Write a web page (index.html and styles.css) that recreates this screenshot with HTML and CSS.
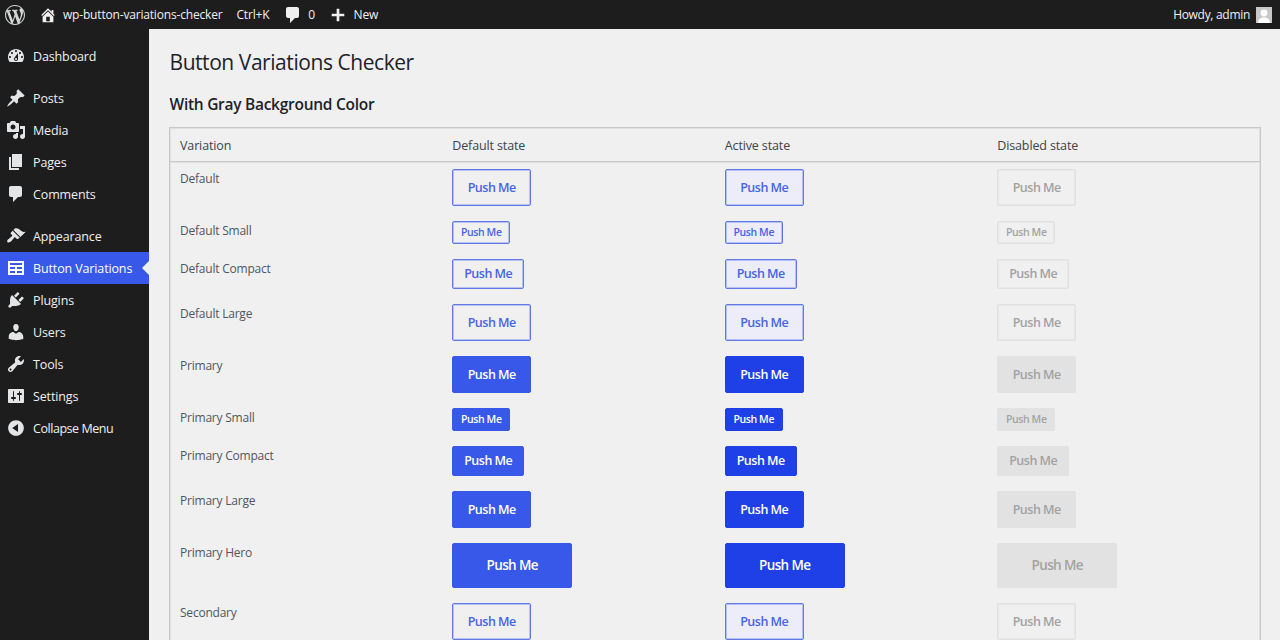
FILE: index.html
```html
<!DOCTYPE html>
<html lang="en">
<head>
<meta charset="utf-8">
<title>Button Variations Checker</title>
<link rel="stylesheet" href="styles.css">
</head>
<body>
<header class="adminbar">
  <svg class="logo" viewBox="0 0 20 20"><path d="M20 10c0-5.51-4.49-10-10-10C4.48 0 0 4.49 0 10c0 5.52 4.48 10 10 10 5.51 0 10-4.48 10-10zM7.78 15.37L4.37 6.22c.55-.02 1.17-.08 1.17-.08.5-.06.44-1.13-.06-1.11 0 0-1.45.11-2.37.11-.18 0-.37 0-.58-.01C4.12 2.69 6.87 1.11 10 1.11c2.33 0 4.45.87 6.05 2.34-.68-.11-1.65.39-1.65 1.58 0 .74.45 1.36.9 2.1.35.61.55 1.36.55 2.46 0 1.49-1.4 5-1.4 5l-3.03-8.37c.54-.02.82-.17.82-.17.5-.05.44-1.25-.06-1.22 0 0-1.44.12-2.38.12-.87 0-2.33-.12-2.33-.12-.5-.03-.56 1.2-.06 1.22l.92.08 1.26 3.41zM17.41 10c.24-.64.74-1.87.43-4.25.7 1.29 1.05 2.71 1.05 4.25 0 3.29-1.73 6.24-4.4 7.78.97-2.59 1.94-5.2 2.92-7.78zM6.1 18.09C3.12 16.65 1.11 13.53 1.11 10c0-1.3.23-2.48.72-3.59C3.25 10.3 4.67 14.2 6.1 18.09zm4.03-6.63l2.58 6.98c-.86.29-1.76.45-2.71.45-.79 0-1.57-.11-2.29-.33.81-2.38 1.62-4.74 2.42-7.1z"/></svg>
  <svg class="bar-icon home" viewBox="0 0 20 20"><path d="M16 8.5l1.53 1.53-1.06 1.06L10 4.62l-6.47 6.47-1.06-1.06L10 2.5l4 4v-2h2v4zm-6-2.46l6 5.99V18H4v-5.97zM12 17v-5H8v5h4z"/></svg>
  <span class="bar-text site">wp-button-variations-checker</span>
  <span class="bar-text ctrl">Ctrl+K</span>
  <svg class="bar-icon bubble" viewBox="0 0 20 20"><path d="M5 2h9c1.1 0 2 .9 2 2v7c0 1.1-.9 2-2 2h-2l-5 5v-5H5c-1.1 0-2-.9-2-2V4c0-1.1.9-2 2-2z"/></svg>
  <span class="bar-text count">0</span>
  <svg class="bar-icon plus" viewBox="0 0 20 20"><path d="M17 8.5v3h-5.5V17h-3v-5.5H3v-3h5.5V3h3v5.5z"/></svg>
  <span class="bar-text new">New</span>
  <span class="bar-text howdy">Howdy, admin</span>
  <span class="avatar"><svg viewBox="0 0 16 16"><circle cx="8" cy="6" r="3.4"/><path d="M2 16c0-4 2.6-5.6 6-5.6s6 1.6 6 5.6z"/></svg></span>
</header>
<div class="frame">
  <nav class="sidebar">
    <a class="item"><svg viewBox="0 0 20 20"><path d="M3.76 16h12.48c1.1-1.37 1.76-3.11 1.76-5 0-4.42-3.58-8-8-8s-8 3.58-8 8c0 1.89.66 3.63 1.76 5zM10 4c.55 0 1 .45 1 1s-.45 1-1 1-1-.45-1-1 .45-1 1-1zM6 6c.55 0 1 .45 1 1s-.45 1-1 1-1-.45-1-1 .45-1 1-1zm8 0c.55 0 1 .45 1 1s-.45 1-1 1-1-.45-1-1 .45-1 1-1zm-5.37 5.55L12 7v6c0 1.1-.9 2-2 2s-2-.9-2-2c0-.57.24-1.08.63-1.45zM4 10c.55 0 1 .45 1 1s-.45 1-1 1-1-.45-1-1 .45-1 1-1zm12 0c.55 0 1 .45 1 1s-.45 1-1 1-1-.45-1-1 .45-1 1-1zm-5 3c0-.55-.45-1-1-1s-1 .45-1 1 .45 1 1 1 1-.45 1-1z"/></svg><span>Dashboard</span></a>
    <div class="sep"></div>
    <a class="item"><svg viewBox="0 0 20 20"><path d="M10.44 3.02l1.82-1.82 6.36 6.35-1.83 1.82c-1.05-.68-2.48-.57-3.41.36l-.75.75c-.92.93-1.04 2.35-.35 3.41l-1.83 1.82-2.41-2.41-2.8 2.79c-.42.42-3.38 2.71-3.8 2.29s1.86-3.39 2.28-3.81l2.79-2.79L4.1 9.36l1.83-1.82c1.05.69 2.48.57 3.4-.36l.75-.75c.93-.92 1.05-2.35.36-3.41z"/></svg><span>Posts</span></a>
    <a class="item"><svg viewBox="0 0 20 20"><path d="M13 11V4c0-.55-.45-1-1-1h-1.67L9 1H5L3.67 3H2c-.55 0-1 .45-1 1v7c0 .55.45 1 1 1h10c.55 0 1-.45 1-1zM7 4.5c1.38 0 2.5 1.12 2.5 2.5S8.38 9.5 7 9.5 4.5 8.38 4.5 7 5.62 4.5 7 4.5zM14 6h5v10.5c0 1.38-1.12 2.5-2.5 2.5S14 17.88 14 16.5s1.12-2.5 2.5-2.5c.17 0 .34.02.5.05V9h-3V6zm-4 8.05V13h2v3.5c0 1.38-1.12 2.5-2.5 2.5S7 17.88 7 16.5 8.12 14 9.5 14c.17 0 .34.02.5.05z"/></svg><span>Media</span></a>
    <a class="item"><svg viewBox="0 0 20 20"><path d="M6 15V2h10v13H6zm-1 1h8v2H3V5h2v11z"/></svg><span>Pages</span></a>
    <a class="item"><svg viewBox="0 0 20 20"><path d="M5 2h9c1.1 0 2 .9 2 2v7c0 1.1-.9 2-2 2h-2l-5 5v-5H5c-1.1 0-2-.9-2-2V4c0-1.1.9-2 2-2z"/></svg><span>Comments</span></a>
    <div class="sep"></div>
    <a class="item"><svg viewBox="0 0 20 20"><path d="M14.48 11.06L7.41 3.99l1.5-1.5c.5-.56 2.3-.47 3.51.32 1.21.8 1.43 1.28 2.91 2.1 1.18.64 2.45 1.26 4.45.85zm-.71.71L6.7 4.7 4.93 6.47c-.39.39-.39 1.02 0 1.41l1.06 1.06c.39.39.39 1.03 0 1.42-.6.6-1.43 1.11-2.21 1.69-.35.26-.7.53-1.01.84C1.43 13.23.65 15.3 1.5 16.15s3 .09 4.14-1.28c.25-.3.5-.66.8-1.05.55-.77 1.1-1.6 1.7-2.19.39-.39 1.02-.39 1.41 0l1.06 1.06c.39.39 1.02.39 1.41 0z"/></svg><span>Appearance</span></a>
    <a class="item current"><svg viewBox="0 0 20 20"><path d="M18 17V3H2v14h16zM16 7H4V5h12v2zm-7 4H4V9h5v2zm7 0h-5V9h5v2zm-7 4H4v-2h5v2zm7 0h-5v-2h5v2z"/></svg><span>Button Variations</span></a>
    <a class="item"><svg viewBox="0 0 20 20"><path d="M13.11 4.36L9.87 7.6 8 5.73l3.24-3.24c.35-.34 1.05-.2 1.56.32.52.51.66 1.21.31 1.55zm-8 1.77l.91-1.12 9.01 9.01-1.19.84c-.71.71-2.63 1.16-3.82 1.16H6.14L4.9 17.26c-.59.59-1.54.59-2.12 0-.59-.58-.59-1.53 0-2.12l1.24-1.24v-3.88c0-1.13.4-3.19 1.09-3.89zm7.26 3.97l3.24-3.24c.34-.35 1.04-.21 1.55.31.52.51.66 1.21.31 1.55l-3.24 3.25z"/></svg><span>Plugins</span></a>
    <a class="item"><svg viewBox="0 0 20 20"><path d="M10 9.25c-2.27 0-2.73-3.44-2.73-3.44C7 4.02 7.82 2 9.97 2c2.16 0 2.98 2.02 2.71 3.81 0 0-.41 3.44-2.68 3.44zm0 2.57L12.72 10c2.39 0 4.52 2.33 4.52 4.53v2.49s-3.65 1.13-7.24 1.13c-3.65 0-7.24-1.13-7.24-1.13v-2.49c0-2.25 1.94-4.48 4.47-4.48z"/></svg><span>Users</span></a>
    <a class="item"><svg viewBox="0 0 20 20"><path d="M16.68 9.77c-1.34 1.34-3.3 1.67-4.95.99l-5.41 6.52c-.99.99-2.59.99-3.58 0s-.99-2.59 0-3.57l6.52-5.42c-.68-1.65-.35-3.61.99-4.95 1.28-1.28 3.12-1.62 4.72-1.06l-2.89 2.89 2.82 2.82 2.86-2.87c.53 1.58.18 3.39-1.08 4.65zM3.81 16.21c.4.39 1.04.39 1.43 0 .4-.4.4-1.04 0-1.43-.39-.4-1.03-.4-1.43 0-.39.39-.39 1.03 0 1.43z"/></svg><span>Tools</span></a>
    <a class="item"><svg viewBox="0 0 20 20"><path d="M18 16V4c0-.55-.45-1-1-1H3c-.55 0-1 .45-1 1v12c0 .55.45 1 1 1h14c.55 0 1-.45 1-1zM8 11h1c.55 0 1 .45 1 1s-.45 1-1 1H8v1.5c0 .28-.22.5-.5.5s-.5-.22-.5-.5V13H6c-.55 0-1-.45-1-1s.45-1 1-1h1V5.5c0-.28.22-.5.5-.5s.5.22.5.5V11zm5-2h-1c-.55 0-1-.45-1-1s.45-1 1-1h1V5.5c0-.28.22-.5.5-.5s.5.22.5.5V7h1c.55 0 1 .45 1 1s-.45 1-1 1h-1v5.5c0 .28-.22.5-.5.5s-.5-.22-.5-.5V9z"/></svg><span>Settings</span></a>
    <a class="item collapse"><svg viewBox="0 0 20 20"><path d="M10 2.16c4.33 0 7.84 3.51 7.84 7.84s-3.51 7.84-7.84 7.84S2.16 14.33 2.16 10 5.71 2.16 10 2.16zm2 11.72V6.12L6.18 9.97z"/></svg><span>Collapse Menu</span></a>
  </nav>
  <main class="content">
    <h1>Button Variations Checker</h1>
    <h2>With Gray Background Color</h2>
    <table class="grid">
      <thead><tr><th>Variation</th><th>Default state</th><th>Active state</th><th>Disabled state</th></tr></thead>
      <tbody>
        <tr><td>Default</td><td><button class="btn dflt">Push Me</button></td><td><button class="btn dflt on">Push Me</button></td><td><button class="btn dflt off">Push Me</button></td></tr>
        <tr><td>Default Small</td><td><button class="btn small dflt">Push Me</button></td><td><button class="btn small dflt on">Push Me</button></td><td><button class="btn small dflt off">Push Me</button></td></tr>
        <tr><td>Default Compact</td><td><button class="btn compact dflt">Push Me</button></td><td><button class="btn compact dflt on">Push Me</button></td><td><button class="btn compact dflt off">Push Me</button></td></tr>
        <tr><td>Default Large</td><td><button class="btn dflt">Push Me</button></td><td><button class="btn dflt on">Push Me</button></td><td><button class="btn dflt off">Push Me</button></td></tr>
        <tr><td>Primary</td><td><button class="btn prim">Push Me</button></td><td><button class="btn prim on">Push Me</button></td><td><button class="btn prim off">Push Me</button></td></tr>
        <tr><td>Primary Small</td><td><button class="btn small prim">Push Me</button></td><td><button class="btn small prim on">Push Me</button></td><td><button class="btn small prim off">Push Me</button></td></tr>
        <tr><td>Primary Compact</td><td><button class="btn compact prim">Push Me</button></td><td><button class="btn compact prim on">Push Me</button></td><td><button class="btn compact prim off">Push Me</button></td></tr>
        <tr><td>Primary Large</td><td><button class="btn prim">Push Me</button></td><td><button class="btn prim on">Push Me</button></td><td><button class="btn prim off">Push Me</button></td></tr>
        <tr><td>Primary Hero</td><td><button class="btn hero prim">Push Me</button></td><td><button class="btn hero prim on">Push Me</button></td><td><button class="btn hero prim off">Push Me</button></td></tr>
        <tr><td>Secondary</td><td><button class="btn dflt">Push Me</button></td><td><button class="btn dflt on">Push Me</button></td><td><button class="btn dflt off">Push Me</button></td></tr>
      </tbody>
    </table>
  </main>
</div>
</body>
</html>
```
FILE: styles.css
```css
* { box-sizing: border-box; }
html, body { margin: 0; height: 640px; overflow: hidden; }
body { font-family: "Open Sans", "Noto Sans", sans-serif; font-size: 12.5px; background: #f0f0f1; color: #50575e; letter-spacing: -0.13px; }

.adminbar { height: 29px; background: #1d1d1d; display: flex; align-items: center; color: #f0f0f1; }
.adminbar svg { fill: #f0f0f1; display: block; flex: none; }
.logo { width: 20px; height: 20px; margin-left: 5px; }
.adminbar .logo { fill: #d4d5d6; }
.bar-icon { width: 18px; height: 18px; }
.home { margin-left: 14px; }
.bar-text { white-space: nowrap; font-size: 12px; letter-spacing: -0.18px; }
.site { margin-left: 6px; }
.ctrl { margin-left: 14px; }
.adminbar .bubble { margin-left: 14px; width: 20px; height: 20px; }
.count { margin-left: 5px; }
.adminbar .plus { margin-left: 14px; }
.new { margin-left: 6.5px; }
.bar-text.howdy { margin-left: auto; letter-spacing: -0.3px; }
.avatar { width: 16px; height: 16px; margin: 0 8px 0 6px; background: #c8c8c8; overflow: hidden; }
.adminbar .avatar svg { fill: #fff; width: 16px; height: 16px; }

.frame { display: flex; height: 611px; }
.sidebar { width: 149px; flex: none; background: #1d1d1d; padding-top: 11px; }
.item { height: 32px; display: flex; align-items: center; padding-left: 6px; color: #f0f0f1; position: relative; white-space: nowrap; }
.item svg { width: 20px; height: 20px; fill: #e4e5e6; flex: none; margin-right: 7px; }
.collapse { letter-spacing: -0.45px; }
.sep { height: 10px; }
.current { background: #3858e9; color: #fff; }
.current svg { fill: #fff; }
.current::after { content: ""; position: absolute; right: 0; top: 9px; border: 7px solid transparent; border-right-color: #f0f0f1; border-left-width: 0; }

.content { flex: 1; padding: 0 19px 0 20px; min-width: 0; }
h1 { margin: 19px 0 0 0.5px; font-size: 21px; font-weight: 400; line-height: 28px; color: #1d2327; letter-spacing: -0.44px; }
h2 { margin: 18px 0 0 0.5px; font-size: 15.5px; font-weight: 600; line-height: 20px; color: #1d2327; letter-spacing: -0.27px; }

.grid { width: 100%; margin-top: 13px; border: 1px solid #c8c8c9; border-bottom: 0; border-spacing: 0; table-layout: fixed; text-align: left; box-shadow: inset 1px 1px 0 #e0e0e1, inset -1px 0 0 #e0e0e1; }
.grid th { height: 34px; padding: 1px 10px 0; font-weight: 400; color: #3c434a; border-bottom: 1px solid #c8c8c9; box-shadow: 0 1px 0 #e0e0e1; vertical-align: middle; }
.grid th + th, .grid td + td { padding-left: 9.75px; }
.grid td { padding: 7px 10px 8px; vertical-align: top; line-height: 20px; font-size: 12px; letter-spacing: -0.22px; }

.btn { display: block; font: 600 12.5px/1 "Open Sans", "Noto Sans", sans-serif; letter-spacing: -0.5px; width: 79px; height: 37px; padding: 1px 0 0; border-radius: 2px; border: 1px solid; }
.small { width: 58px; height: 23px; padding-top: 0; font-size: 10.5px; letter-spacing: -0.4px; }
.compact { width: 72px; height: 30px; }
.hero { width: 120px; height: 45px; font-size: 13.5px; letter-spacing: -0.6px; }
.dflt { background: transparent; color: #4863e6; border-color: #5f78ea; box-shadow: inset 0 0 0 1px rgba(56, 88, 233, 0.3); }
.dflt.on { background: #ecedf8; }
.dflt.off { color: #a2a2a2; border-color: #e0e0e0; background: transparent; box-shadow: inset 0 0 0 1px #e8e8e8; }
.prim { background: #3858e9; color: #fff; border-color: #3858e9; }
.prim.on { background: #1f40e6; border-color: #1f40e6; }
.prim.off { background: #e2e2e2; color: #a2a2a2; border-color: #e2e2e2; }
```
